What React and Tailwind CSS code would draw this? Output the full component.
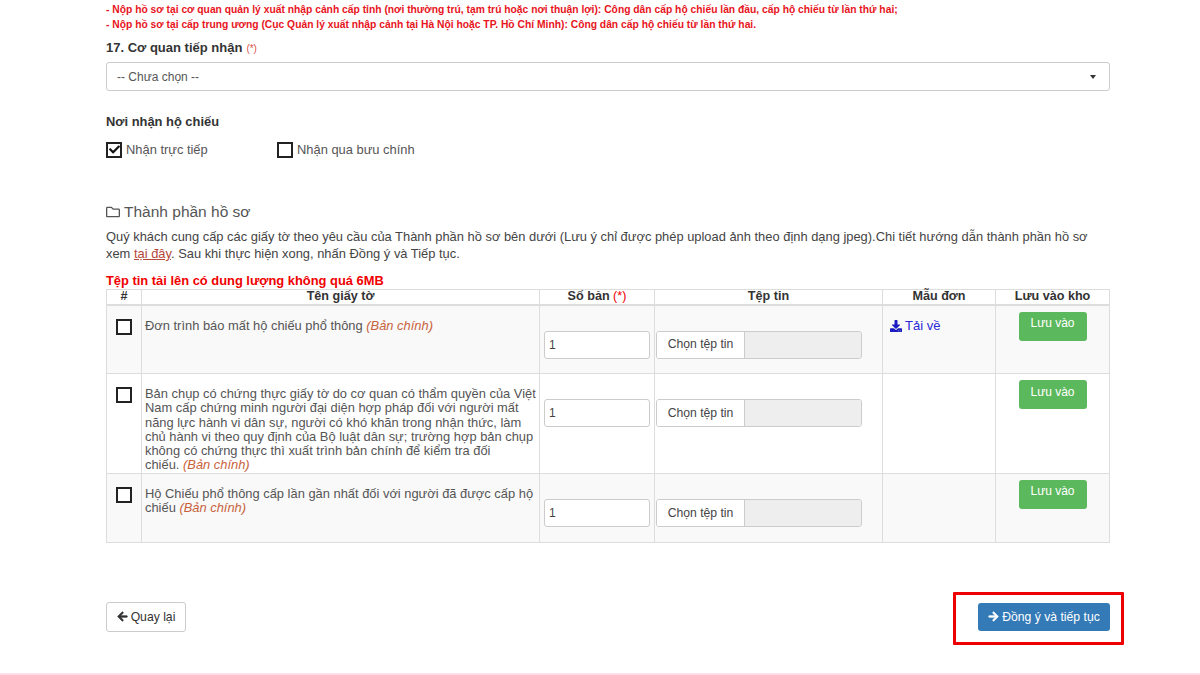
import React from 'react';
import { FaArrowLeft, FaArrowRight, FaCheck, FaDownload, FaRegFolder } from 'react-icons/fa';

const rows = [
  {
    id: 1,
    name: 'Đơn trình báo mất hộ chiếu phổ thông',
    height: 'h-[69px]',
    stripe: true,
    download: true,
  },
  {
    id: 2,
    name: 'Bản chụp có chứng thực giấy tờ do cơ quan có thẩm quyền của Việt Nam cấp chứng minh người đại diện hợp pháp đối với người mất năng lực hành vi dân sự, người có khó khăn trong nhận thức, làm chủ hành vi theo quy định của Bộ luật dân sự; trường hợp bản chụp không có chứng thực thì xuất trình bản chính để kiểm tra đối\nchiếu.',
    height: 'h-[99px]',
  },
  {
    id: 3,
    name: 'Hộ Chiếu phổ thông cấp lần gần nhất đối với người đã được cấp hộ chiếu',
    height: 'h-[69px]',
    stripe: true,
  },
];

const Checkbox = ({ checked }) => (
  <span className="flex h-[16px] w-[16px] items-center justify-center border-2 border-[#222] bg-white text-[#111]">
    {checked && <FaCheck className="h-[11px] w-[11px]" />}
  </span>
);

const Row = ({ row }) => (
  <tr className={`${row.height} ${row.stripe ? 'bg-[#f9f9f9]' : 'bg-white'}`}>
    <td className="border border-[#ddd] pt-[13px] align-top">
      <div className="flex justify-center">
        <Checkbox />
      </div>
    </td>
    <td className="whitespace-pre-line border border-[#ddd] px-[3px] pt-[13px] align-top leading-[14.3px] text-[#555]">
      {row.name} <em className="text-[#c8623c]">(Bản chính)</em>
    </td>
    <td className="border border-[#ddd] pl-[4px] pt-[25px] align-top">
      <div className="flex h-[28px] w-[106px] items-center rounded-[3px] border border-[#ccc] bg-white pl-[4px] text-[12px] text-[#444]">
        1
      </div>
    </td>
    <td className="border border-[#ddd] pl-[1px] pt-[25px] align-top">
      <div className="flex h-[28px] w-[206px] overflow-hidden rounded-[3px] border border-[#ccc]">
        <span className="flex w-[87px] items-center justify-center bg-white text-[12.2px] text-[#444]">Chọn tệp tin</span>
        <span className="flex-1 border-l border-[#ccc] bg-[#eee]" />
      </div>
    </td>
    <td className="border border-[#ddd] pl-[7px] pt-[11px] align-top">
      {row.download && (
        <a className="flex items-center gap-[3px] text-[13px] leading-[18px] text-[#2a2ad8]">
          <FaDownload className="h-[12px] w-[12px] text-[#1c1cc0]" />
          Tải về
        </a>
      )}
    </td>
    <td className="border border-[#ddd] pt-[6px] align-top">
      <div className="flex justify-center">
        <button className="h-[29px] w-[68px] rounded-[3px] bg-[#5cb85c] pb-[6px] text-[12px] leading-[22px] text-white">
          Lưu vào
        </button>
      </div>
    </td>
  </tr>
);

export default function App() {
  return (
    <div className="relative h-[675px] w-[1200px] overflow-hidden bg-white font-['Liberation_Sans',Arial,sans-serif] text-[12.9px] text-[#333]">
      <div className="flex h-[673px] flex-col pl-[106px] pr-[90px] pt-[2px]">
        <div className="text-[10.3px] font-bold leading-[15px] text-[#e8141c]">
          <p>- Nộp hồ sơ tại cơ quan quản lý xuất nhập cảnh cấp tỉnh (nơi thường trú, tạm trú hoặc nơi thuận lợi): Công dân cấp hộ chiếu lần đầu, cấp hộ chiếu từ lần thứ hai;</p>
          <p>- Nộp hồ sơ tại cấp trung ương (Cục Quản lý xuất nhập cảnh tại Hà Nội hoặc TP. Hồ Chí Minh): Công dân cấp hộ chiếu từ lần thứ hai.</p>
        </div>

        <div className="mt-[6px] flex h-[20px] items-center text-[13px] font-bold text-[#333]">
          17. Cơ quan tiếp nhận
          <span className="ml-[4px] text-[10px] font-normal text-[#d9534f]">(*)</span>
        </div>
        <div className="mt-[4px] flex h-[29px] items-center justify-between rounded-[3px] border border-[#ccc] bg-white pl-[10px] pr-[13px] text-[12px] text-[#555]">
          <span>-- Chưa chọn --</span>
          <span className="h-0 w-0 border-x-[3.5px] border-t-[4px] border-x-transparent border-t-[#333]" />
        </div>

        <div className="mt-[21px] flex h-[20px] items-center font-bold">Nơi nhận hộ chiếu</div>
        <div className="mt-[8px] flex h-[20px] items-center text-[#555]">
          <div className="flex w-[171px] items-center gap-[4px]">
            <Checkbox checked />
            Nhận trực tiếp
          </div>
          <div className="flex items-center gap-[4px]">
            <Checkbox />
            Nhận qua bưu chính
          </div>
        </div>

        <div className="mt-[41px] flex h-[22px] items-center gap-[4px] text-[15.5px] text-[#555]">
          <FaRegFolder className="h-[14px] w-[14px]" />
          Thành phần hồ sơ
        </div>
        <div className="mt-[5px] leading-[17px] text-[#444]">
          Quý khách cung cấp các giấy tờ theo yêu cầu của Thành phần hồ sơ bên dưới (Lưu ý chỉ được phép upload ảnh theo định dạng jpeg).Chi tiết hướng dẫn thành phần hồ sơ xem{' '}
          <a className="text-[#b5473c] underline">tại đây</a>. Sau khi thực hiện xong, nhấn Đồng ý và Tiếp tục.
        </div>

        <div className="mt-[10px] h-[17px] font-bold leading-[17px] text-[#f00000]">Tệp tin tải lên có dung lượng không quá 6MB</div>

        <table className="w-[1003px] table-fixed border-collapse">
          <colgroup>
            <col className="w-[35px]" />
            <col className="w-[398px]" />
            <col className="w-[115px]" />
            <col className="w-[228px]" />
            <col className="w-[113px]" />
            <col className="w-[114px]" />
          </colgroup>
          <thead>
            <tr className="h-[15px] text-[12.6px] font-bold leading-[13px] text-[#333]">
              <th className="border border-b-2 border-[#ddd]">#</th>
              <th className="border border-b-2 border-[#ddd]">Tên giấy tờ</th>
              <th className="border border-b-2 border-[#ddd]">
                Số bản <span className="font-normal text-[#f00000]">(*)</span>
              </th>
              <th className="border border-b-2 border-[#ddd]">Tệp tin</th>
              <th className="border border-b-2 border-[#ddd]">Mẫu đơn</th>
              <th className="border border-b-2 border-[#ddd]">Lưu vào kho</th>
            </tr>
          </thead>
          <tbody>
            {rows.map((row) => (
              <Row key={row.id} row={row} />
            ))}
          </tbody>
        </table>

        <div className="mt-[59px] flex items-center justify-between">
          <button className="flex h-[30px] w-[80px] items-center justify-center gap-[3px] rounded-[3px] border border-[#ccc] bg-white text-[12.2px] text-[#333]">
            <FaArrowLeft className="h-[11px] w-[11px] stroke-current stroke-[30]" />
            Quay lại
          </button>
          <button className="flex h-[28px] w-[132px] items-center justify-center gap-[3px] rounded-[3px] bg-[#337ab7] text-[12.2px] text-white">
            <FaArrowRight className="h-[11px] w-[11px] stroke-current stroke-[30]" />
            Đồng ý và tiếp tục
          </button>
        </div>
      </div>

      <div className="h-[2px] bg-[#ffdfec]" />
      {/* annotation over the submit button */}
      <div className="absolute left-[953px] top-[592px] h-[53px] w-[171px] rounded-[1px] border-[3px] border-[#ee0000]" />
    </div>
  );
}
